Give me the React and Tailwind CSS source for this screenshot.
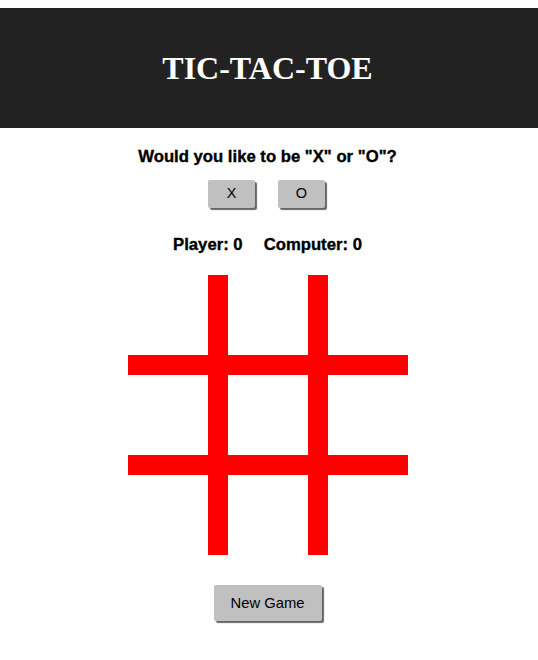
import React from "react";

export default function App() {
  const cells = Array.from({ length: 9 });
  return (
    <div className="min-h-[660px] bg-white pt-[8px] font-['Liberation_Sans',Arial,sans-serif] text-black">
      <header className="flex h-[120px] items-center justify-center bg-[#222222] pr-[3px]">
        <h1 className="font-['Liberation_Serif','Times_New_Roman',serif] text-[32px] font-bold leading-none text-white">
          TIC-TAC-TOE
        </h1>
      </header>
      <main className="flex flex-col items-center pr-[3px]">
        <p className="mt-[19px] text-[16.7px] font-bold leading-[19px] [-webkit-text-stroke:0.35px_black]">
          Would you like to be "X" or "O"?
        </p>
        <div className="mt-[14px] flex gap-[23px] pr-[2px]">
          <button className="h-[28px] w-[47px] rounded-[2px] bg-[#c0c0c0] text-[14.5px] shadow-[2px_2px_1px_#666]">
            X
          </button>
          <button className="h-[28px] w-[47px] rounded-[2px] bg-[#c0c0c0] text-[14.5px] shadow-[2px_2px_1px_#666]">
            O
          </button>
        </div>
        <div className="mt-[27px] flex gap-[21px] text-[16.7px] font-bold leading-[19px] [-webkit-text-stroke:0.35px_black]">
          <span>Player: 0</span>
          <span>Computer: 0</span>
        </div>
        <div className="mt-[21px] grid h-[280px] w-[280px] grid-cols-3 grid-rows-3 gap-[20px] bg-[#ff0000]">
          {cells.map((_, i) => (
            <div key={i} className="bg-white" />
          ))}
        </div>
        <button className="mt-[30px] h-[36px] w-[108px] rounded-[2px] bg-[#c0c0c0] text-[14.8px] shadow-[2px_2px_1px_#666]">
          New Game
        </button>
      </main>
    </div>
  );
}
